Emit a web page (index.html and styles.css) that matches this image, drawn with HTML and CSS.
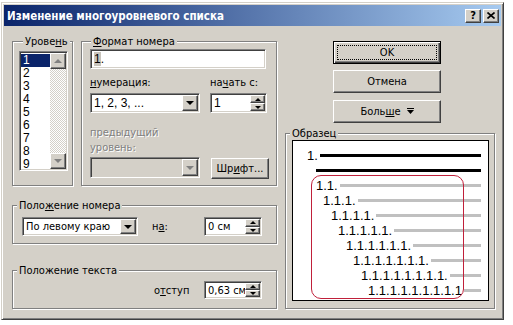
FILE: index.html
```html
<!DOCTYPE html>
<html lang="ru">
<head>
	<title>Изменение многоуровневого списка</title>
	<meta charset="UTF-8">
	<link rel="stylesheet" href="styles.css">
</head>
<body>
	<div class="window">
		<div class="titlebar">
			<span class="title">Изменение многоуровневого списка</span>
			<div class="cap-buttons">
				<span class="cap-btn raised">?</span>
				<span class="cap-btn raised">
					<svg width="8" height="7" viewBox="0 0 8 7"><path d="M0.5 0.5 L7.5 6.5 M7.5 0.5 L0.5 6.5" stroke="#000" stroke-width="1.6"/></svg>
				</span>
			</div>
		</div>
		<div class="dialog">
			<div class="left-col">
				<div class="top-row">
					<div class="group level-group">
						<div class="group-title">Урове<u>н</u>ь</div>
						<div class="listbox sunken">
							<div class="list-items">
								<div class="item selected">1</div>
								<div class="item">2</div>
								<div class="item">3</div>
								<div class="item">4</div>
								<div class="item">5</div>
								<div class="item">6</div>
								<div class="item">7</div>
								<div class="item">8</div>
								<div class="item">9</div>
							</div>
							<div class="scrollbar">
								<span class="sb-btn raised"><i class="tri-up gray"></i></span>
								<span class="sb-track"></span>
								<span class="sb-btn raised"><i class="tri-down gray"></i></span>
							</div>
						</div>
					</div>
					<div class="group format-group">
						<div class="group-title"><u>Ф</u>ормат номера</div>
						<div class="format-field sunken"><span class="sel">1</span>.</div>
						<div class="row num-row">
							<div>
								<label><u>н</u>умерация:</label>
								<div class="combo sunken num-combo">
									<span class="combo-text">1, 2, 3, ...</span>
									<span class="combo-btn raised"><i class="tri-down"></i></span>
								</div>
							</div>
							<div class="start-col">
								<label>на<u>ч</u>ать с:</label>
								<div class="spin sunken start-spin">
									<span class="spin-text">1</span>
									<span class="spin-btns">
										<span class="spin-btn raised"><i class="tri-up small"></i></span>
										<span class="spin-btn raised"><i class="tri-down small"></i></span>
									</span>
								</div>
							</div>
						</div>
						<div class="row prev-row">
							<div>
								<div class="disabled-label">предыдущий<br>уровень:</div>
								<div class="combo sunken disabled prev-combo">
									<span class="combo-text"></span>
									<span class="combo-btn raised"><i class="tri-down gray"></i></span>
								</div>
							</div>
							<div class="btn raised font-btn"><span>Шр<u>и</u>фт...</span></div>
						</div>
					</div>
				</div>
				<div class="group numpos-group">
					<div class="group-title">Поло<u>ж</u>ение номера</div>
					<div class="row numpos-row">
						<div class="combo sunken align-combo">
							<span class="combo-text">По левому краю</span>
							<span class="combo-btn raised"><i class="tri-down"></i></span>
						</div>
						<label class="at-label">н<u>а</u>:</label>
						<div class="spin sunken pos-spin">
							<span class="spin-text">0 см</span>
							<span class="spin-btns">
								<span class="spin-btn raised"><i class="tri-up small"></i></span>
								<span class="spin-btn raised"><i class="tri-down small"></i></span>
							</span>
						</div>
					</div>
				</div>
				<div class="group textpos-group">
					<div class="group-title">Положение текста</div>
					<div class="row textpos-row">
						<label class="indent-label">о<u>т</u>ступ</label>
						<div class="spin sunken pos-spin indent-spin">
							<span class="spin-text">0,63 см</span>
							<span class="spin-btns">
								<span class="spin-btn raised"><i class="tri-up small"></i></span>
								<span class="spin-btn raised"><i class="tri-down small"></i></span>
							</span>
						</div>
					</div>
				</div>
			</div>
			<div class="right-col">
				<div class="btn btn-default"><span class="focus">OK</span></div>
				<div class="btn raised"><span>Отмена</span></div>
				<div class="btn raised more-btn"><span>Боль<u>ш</u>е</span>
					<svg width="7" height="7" viewBox="0 0 7 7"><rect x="0" y="0" width="7" height="1" fill="#000"/><path d="M0 2 H7 L3.5 6 Z" fill="#000"/></svg>
				</div>
				<div class="group sample-group">
					<div class="group-title">Образец</div>
					<div class="preview">
						<div class="pv-row l0"><span class="pv-text">1.</span><span class="bar black"></span></div>
						<div class="pv-row l1"><span class="bar black flush"></span></div>
						<div class="pv-row l1"><span class="pv-text">1.1.</span><span class="bar"></span></div>
						<div class="pv-row l2"><span class="pv-text">1.1.1.</span><span class="bar"></span></div>
						<div class="pv-row l3"><span class="pv-text">1.1.1.1.</span><span class="bar"></span></div>
						<div class="pv-row l4"><span class="pv-text">1.1.1.1.1.</span><span class="bar"></span></div>
						<div class="pv-row l5"><span class="pv-text">1.1.1.1.1.1.</span><span class="bar"></span></div>
						<div class="pv-row l6"><span class="pv-text">1.1.1.1.1.1.1.</span><span class="bar"></span></div>
						<div class="pv-row l7"><span class="pv-text">1.1.1.1.1.1.1.1.</span><span class="bar"></span></div>
						<div class="pv-row l8"><span class="pv-text">1.1.1.1.1.1.1.1.1</span><span class="bar"></span></div>
						<div class="highlight"></div>
					</div>
				</div>
			</div>
		</div>
	</div>
</body>
</html>
```
FILE: styles.css
```css
html, body {
	margin: 0;
	background: #fff;
}
body {
	font-family: "DejaVu Sans Condensed", "DejaVu Sans", sans-serif;
	font-size: 11px;
	color: #000;
}
u {
	text-decoration: underline;
	text-underline-offset: 1px;
}

/* 3d borders */
.raised {
	box-sizing: border-box;
	background: #d4d0c8;
	border: 1px solid;
	border-color: #fff #404040 #404040 #fff;
	box-shadow: inset -1px -1px #808080;
}
.sunken {
	box-sizing: border-box;
	background: #fff;
	border: 1px solid;
	border-color: #808080 #fff #fff #808080;
	box-shadow: inset 1px 1px #404040, inset -1px -1px #d4d0c8;
}

/* window */
.window {
	box-sizing: border-box;
	margin: 2px 0 0 1px;
	width: 503px;
	height: 318px;
	padding: 2px;
	background: #d4d0c8;
	border: 1px solid;
	border-color: #d4d0c8 #404040 #404040 #d4d0c8;
	box-shadow: inset 1px 1px #fff, inset -1px -1px #808080;
}
.titlebar {
	height: 21px;
	display: flex;
	align-items: center;
	justify-content: space-between;
	padding: 0 2px 0 3px;
	background: linear-gradient(to right, #0a246a, #a6caf0);
	color: #fff;
}
.title {
	font-weight: bold;
	font-size: 11.5px;
}
.cap-buttons {
	display: flex;
	gap: 2px;
}
.cap-btn {
	width: 16px;
	height: 14px;
	display: flex;
	align-items: center;
	justify-content: center;
	color: #000;
	font-weight: bold;
	font-size: 11px;
	line-height: 12px;
}

/* dialog layout */
.dialog {
	display: flex;
	padding: 15px 0 0 8px;
}
.left-col {
	width: 265px;
}
.right-col {
	width: 210px;
	margin-left: 8px;
}
.top-row, .row {
	display: flex;
}

/* group boxes */
.group {
	box-sizing: border-box;
	border: 1px solid #808080;
	box-shadow: 1px 1px #fff, inset 1px 1px #fff;
}
.group-title {
	width: max-content;
	margin: -7px 0 0 4px;
	padding: 0 2px;
	background: #d4d0c8;
	line-height: 13px;
}
.format-group .group-title {
	margin-left: 1px;
}
label {
	display: block;
	line-height: 13px;
}

/* level list */
.level-group {
	width: 61px;
	height: 145px;
	padding-left: 6px;
}
.listbox {
	display: flex;
	width: 49px;
	height: 120px;
	margin-top: 3px;
	padding: 1px;
}
.list-items {
	flex: 1;
	padding-top: 1px;
	font-family: "Liberation Sans", sans-serif;
	font-size: 12px;
	line-height: 13px;
}
.item {
	padding-left: 2px;
}
.item.selected {
	background: #0a246a;
	color: #fff;
}
.scrollbar {
	width: 16px;
	display: flex;
	flex-direction: column;
	background-color: #fff;
	background-image: conic-gradient(#d4d0c8 25%, #fff 0 50%, #d4d0c8 0 75%, #fff 0);
	background-size: 2px 2px;
}
.sb-btn {
	height: 16px;
	display: flex;
	align-items: center;
	justify-content: center;
}
.sb-track {
	flex: 1;
}

/* arrows */
.tri-down, .tri-up {
	width: 0;
	height: 0;
	border-left: 4px solid transparent;
	border-right: 4px solid transparent;
}
.tri-down {
	border-top: 4px solid #000;
}
.tri-up {
	border-bottom: 4px solid #000;
}
.tri-down.small, .tri-up.small {
	border-left-width: 3px;
	border-right-width: 3px;
}
.tri-down.small {
	border-top-width: 3px;
}
.tri-up.small {
	border-bottom-width: 3px;
}
.tri-down.gray {
	border-top-color: #808080;
}
.tri-up.gray {
	border-bottom-color: #808080;
}

/* number format */
.format-group {
	width: 196px;
	height: 145px;
	margin-left: 8px;
	padding-left: 8px;
}
.format-field {
	width: 176px;
	height: 20px;
	margin-top: 1px;
	padding: 1px 3px;
	font-family: "Liberation Sans", sans-serif;
	font-size: 12px;
	line-height: 16px;
}
.sel {
	background: #c8c4bc;
}
.num-row {
	margin-top: 7px;
}
.combo, .spin {
	display: flex;
	padding: 1px;
}
.combo-text, .spin-text {
	flex: 1;
	padding-left: 2px;
	font-family: "Liberation Sans", sans-serif;
	font-size: 12px;
	white-space: nowrap;
	overflow: hidden;
	display: flex;
	align-items: center;
}
.combo-btn {
	width: 16px;
	display: flex;
	align-items: center;
	justify-content: center;
}
.spin-btns {
	width: 15px;
	display: flex;
	flex-direction: column;
}
.spin-btn {
	flex: 1;
	display: flex;
	align-items: center;
	justify-content: center;
}
.num-combo {
	width: 110px;
	height: 20px;
	margin-top: 4px;
}
.start-col {
	margin-left: 10px;
}
.start-spin {
	width: 57px;
	height: 20px;
	margin-top: 4px;
}
.prev-row {
	margin-top: 12px;
	align-items: flex-end;
}
.disabled-label {
	color: #808080;
	text-shadow: 1px 1px #fff;
	line-height: 15px;
}
.combo.disabled {
	background: #d4d0c8;
}
.prev-combo {
	width: 110px;
	height: 21px;
	margin-top: 2px;
}
.btn {
	box-sizing: border-box;
	display: flex;
	align-items: center;
	justify-content: center;
	gap: 6px;
}
.font-btn {
	width: 58px;
	height: 21px;
	margin-left: 11px;
	margin-bottom: -1px;
}

/* positions */
.numpos-group {
	height: 39px;
	margin-top: 19px;
}
.numpos-row {
	align-items: center;
	margin-top: 5px;
	padding-left: 9px;
}
.align-combo {
	width: 116px;
	height: 19px;
}
.align-combo .combo-text, .pos-spin .spin-text {
	font-family: "DejaVu Sans Condensed", "DejaVu Sans", sans-serif;
	font-size: 11px;
}
.at-label {
	width: 52px;
	margin-left: 14px;
}
.pos-spin {
	width: 58px;
	height: 19px;
}
.textpos-group {
	height: 39px;
	margin-top: 26px;
}
.textpos-row {
	align-items: center;
	margin-top: 4px;
	padding-left: 141px;
}
.indent-label {
	width: 50px;
}
.indent-spin {
	height: 18px;
}

/* buttons column */
.right-col > .btn {
	width: 108px;
	height: 23px;
	margin-left: 48px;
	margin-top: 6px;
}
.right-col > .btn-default {
	margin-top: 0;
	background: #d4d0c8;
	border: 1px solid #000;
	box-shadow: inset 1px 1px #fff, inset -1px -1px #404040, inset -2px -2px #808080;
}
.focus {
	box-sizing: border-box;
	width: 100px;
	height: 15px;
	border: 1px dotted #000;
	display: flex;
	align-items: center;
	justify-content: center;
}
.right-col > .more-btn {
	margin-top: 7px;
}

/* sample */
.sample-group {
	height: 176px;
	margin-top: 10px;
}
.preview {
	position: relative;
	box-sizing: border-box;
	width: 197px;
	height: 161px;
	margin-left: 6px;
	padding: 7px 7px 0 0;
	background: #fff;
	border: 1px solid #000;
	font-family: "Liberation Sans", sans-serif;
	font-size: 13px;
}
.pv-row {
	display: flex;
	align-items: center;
	height: 15px;
}
.pv-text {
	white-space: nowrap;
}
.bar {
	flex: 1;
	height: 3px;
	margin-left: 2px;
	background: #c0c0c0;
}
.bar.black {
	background: #000;
}
.bar.flush {
	margin-left: 0;
}
.l0 { padding-left: 14px; }
.l1 { padding-left: 23px; }
.l2 { padding-left: 30px; }
.l3 { padding-left: 38px; }
.l4 { padding-left: 45px; }
.l5 { padding-left: 53px; }
.l6 { padding-left: 60px; }
.l7 { padding-left: 68px; }
.l8 { padding-left: 75px; }
.highlight {
	position: absolute;
	left: 18px;
	top: 34px;
	width: 153px;
	height: 124px;
	box-sizing: border-box;
	border: 1px solid #c0203a;
	border-radius: 10px;
}
```
